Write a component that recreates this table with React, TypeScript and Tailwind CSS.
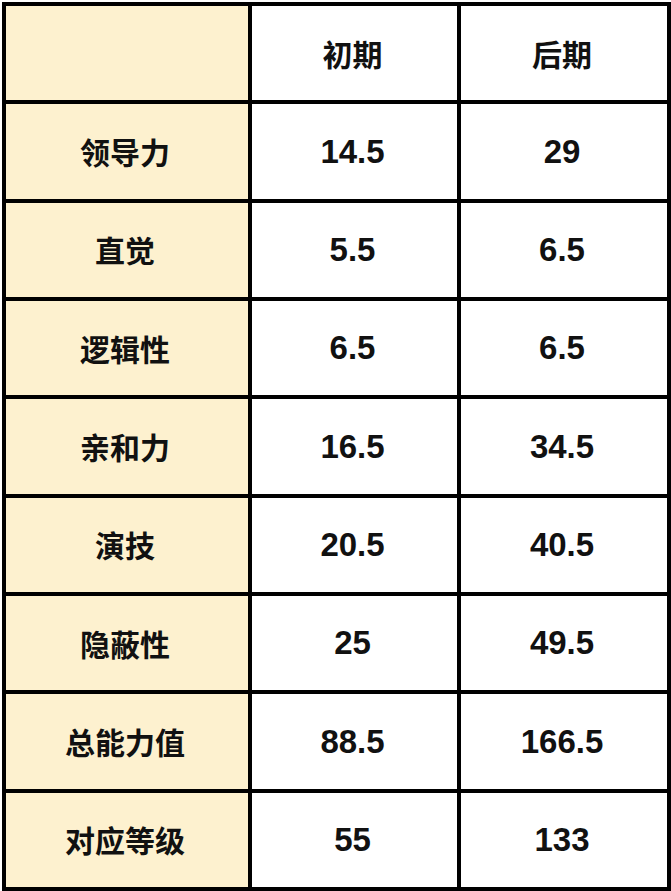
import React from "react";

const rows: [string, string, string][] = [
  ["领导力", "14.5", "29"],
  ["直觉", "5.5", "6.5"],
  ["逻辑性", "6.5", "6.5"],
  ["亲和力", "16.5", "34.5"],
  ["演技", "20.5", "40.5"],
  ["隐蔽性", "25", "49.5"],
  ["总能力值", "88.5", "166.5"],
  ["对应等级", "55", "133"],
];

const cjk = "font-['Noto_Sans_CJK_SC',sans-serif] font-bold text-[30px] text-[#111]";
const num = "font-['Liberation_Sans','Noto_Sans_CJK_SC',sans-serif] font-bold text-[33px] text-[#111]";

export default function App() {
  return (
    <div className="w-[671px] h-[891px] bg-white pl-[2px] pt-[2px]">
      <div className="w-[669px] h-[889px] bg-black p-[4px] grid grid-cols-[242px_205px_206px] grid-rows-9 gap-[4px]">
        <div className="bg-[#fdf1cf]" />
        <div className={`bg-white flex items-center justify-center pr-[4px] ${cjk}`}>初期</div>
        <div className={`bg-white flex items-center justify-center pr-[4px] ${cjk}`}>后期</div>
        {rows.map(([label, a, b]) => (
          <React.Fragment key={label}>
            <div className={`bg-[#fdf1cf] flex items-center justify-center pr-[4px] ${cjk}`}>{label}</div>
            <div className={`bg-white flex items-center justify-center pr-[4px] ${num}`}>{a}</div>
            <div className={`bg-white flex items-center justify-center pr-[4px] ${num}`}>{b}</div>
          </React.Fragment>
        ))}
      </div>
    </div>
  );
}
